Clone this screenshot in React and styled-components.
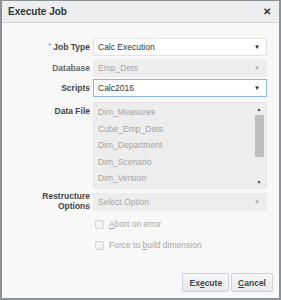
import React from 'react'
import styled, { createGlobalStyle } from 'styled-components'

const Global = createGlobalStyle`
  html, body { margin: 0; padding: 0; background: #fff; }
  body { font-family: "Liberation Sans", Arial, sans-serif; }
`

const Dialog = styled.div`
  width: 281px;
  height: 300px;
  box-sizing: border-box;
  border: 1px solid #8c9097;
  border-left-width: 2px;
  border-right-width: 2px;
  border-bottom-width: 2px;
  background: #f8f8f8;
  display: flex;
  flex-direction: column;
`

const Header = styled.div`
  height: 21px;
  background: #eceef0;
  border-bottom: 1px solid #d3d6d9;
  display: flex;
  align-items: center;
  justify-content: space-between;
  padding: 0 8px 0 6px;
`

const Title = styled.span`
  font-size: 10px;
  font-weight: bold;
  color: #333;
`

const Close = styled.span`
  font-size: 10px;
  font-weight: bold;
  color: #333;
`

const Body = styled.div`
  flex: 1;
  padding: 15px 12px 0 0;
  display: grid;
  grid-template-columns: 88px 174px;
  column-gap: 3px;
  row-gap: 2px;
  align-content: start;
`

const Label = styled.div`
  font-size: 8.5px;
  font-weight: bold;
  color: ${p => (p.$dim ? '#666' : '#444')};
  text-align: right;
  line-height: ${p => p.$lh || '18px'};
  padding-top: ${p => p.$top || '0'};
`

const Req = styled.span`
  color: #3a7fd1;
  font-weight: normal;
  font-size: 8px;
  margin-right: 2px;
  position: relative;
  top: -2px;
`

const Select = styled.div`
  height: 18px;
  box-sizing: border-box;
  border: 1px solid ${p => (p.$focus ? '#8fb6ea' : p.$disabled ? '#ececec' : '#e2e2e2')};
  background: ${p => (p.$disabled ? '#ededee' : '#fff')};
  display: flex;
  align-items: center;
  justify-content: space-between;
  padding: 0 6px 0 4px;
  font-size: 8.5px;
  color: ${p => (p.$disabled ? '#a6a6a6' : '#333')};
  margin-top: ${p => p.$mt || '0'};
`

const Caret = styled.span`
  font-size: 6px;
  color: ${p => (p.$disabled ? '#a8a8a8' : '#222')};
`

const List = styled.div`
  margin-top: 3px;
  height: 87px;
  box-sizing: border-box;
  background: #ededee;
  border: 1px solid #e6e6e6;
  display: flex;
`

const Items = styled.div`
  flex: 1;
  padding: 1px 0 0 4px;
`

const Item = styled.div`
  font-size: 8.5px;
  color: #a4a4a4;
  line-height: 16.6px;
`

const Scroll = styled.div`
  width: 10px;
  margin-right: 2px;
  display: flex;
  flex-direction: column;
  align-items: center;
`

const Arrow = styled.div`
  height: 12px;
  font-size: 5px;
  color: #444;
  display: flex;
  align-items: center;
`

const Thumb = styled.div`
  width: 9px;
  height: 42px;
  background: #bebebe;
`

const Spacer = styled.div``

const Check = styled.label`
  display: flex;
  align-items: center;
  gap: 5px;
  font-size: 8.5px;
  line-height: 11px;
  color: #a6a6a6;
  margin-top: ${p => p.$mt || '0'};
  padding-left: 2px;
`

const Box = styled.span`
  width: 7px;
  height: 7px;
  border: 1px solid #d4d4d4;
  border-radius: 2px;
  background: #f2f2f2;
`

const Footer = styled.div`
  display: flex;
  justify-content: flex-end;
  gap: 2px;
  padding: 0 6px 6px 0;
`

const Button = styled.button`
  height: 19px;
  padding: 0 6px;
  font-family: "Liberation Sans", Arial, sans-serif;
  font-size: 8.5px;
  font-weight: bold;
  color: #444;
  background: linear-gradient(#f6f7f8, #e7e9eb);
  border: 1px solid #cfd3d7;
  border-radius: 2px;
`

export default function App() {
  return (
    <>
      <Global />
      <Dialog>
        <Header>
          <Title>Execute Job</Title>
          <Close>✕</Close>
        </Header>
        <Body>
          <Label><Req>*</Req>Job Type</Label>
          <Select>Calc Execution<Caret>▼</Caret></Select>

          <Label $dim>Database</Label>
          <Select $disabled>Emp_Dets<Caret $disabled>▼</Caret></Select>

          <Label>Scripts</Label>
          <Select $focus>Calc2016<Caret>▼</Caret></Select>

          <Label $top="3px">Data File</Label>
          <List>
            <Items>
              <Item>Dim_Measures</Item>
              <Item>Cube_Emp_Dets</Item>
              <Item>Dim_Department</Item>
              <Item>Dim_Scenario</Item>
              <Item>Dim_Version</Item>
            </Items>
            <Scroll>
              <Arrow>▲</Arrow>
              <Thumb />
              <Spacer style={{ flex: 1 }} />
              <Arrow>▼</Arrow>
            </Scroll>
          </List>

          <Label $lh="10px" $top="0">Restructure<br />Options</Label>
          <Select $disabled $mt="2px">Select Option<Caret $disabled>▼</Caret></Select>

          <Spacer />
          <Check $mt="6px"><Box /><span><u>A</u>bort on error</span></Check>

          <Spacer />
          <Check $mt="8px"><Box /><span>Force to <u>b</u>uild dimension</span></Check>
        </Body>
        <Footer>
          <Button>Ex<u>e</u>cute</Button>
          <Button><u>C</u>ancel</Button>
        </Footer>
      </Dialog>
    </>
  )
}
